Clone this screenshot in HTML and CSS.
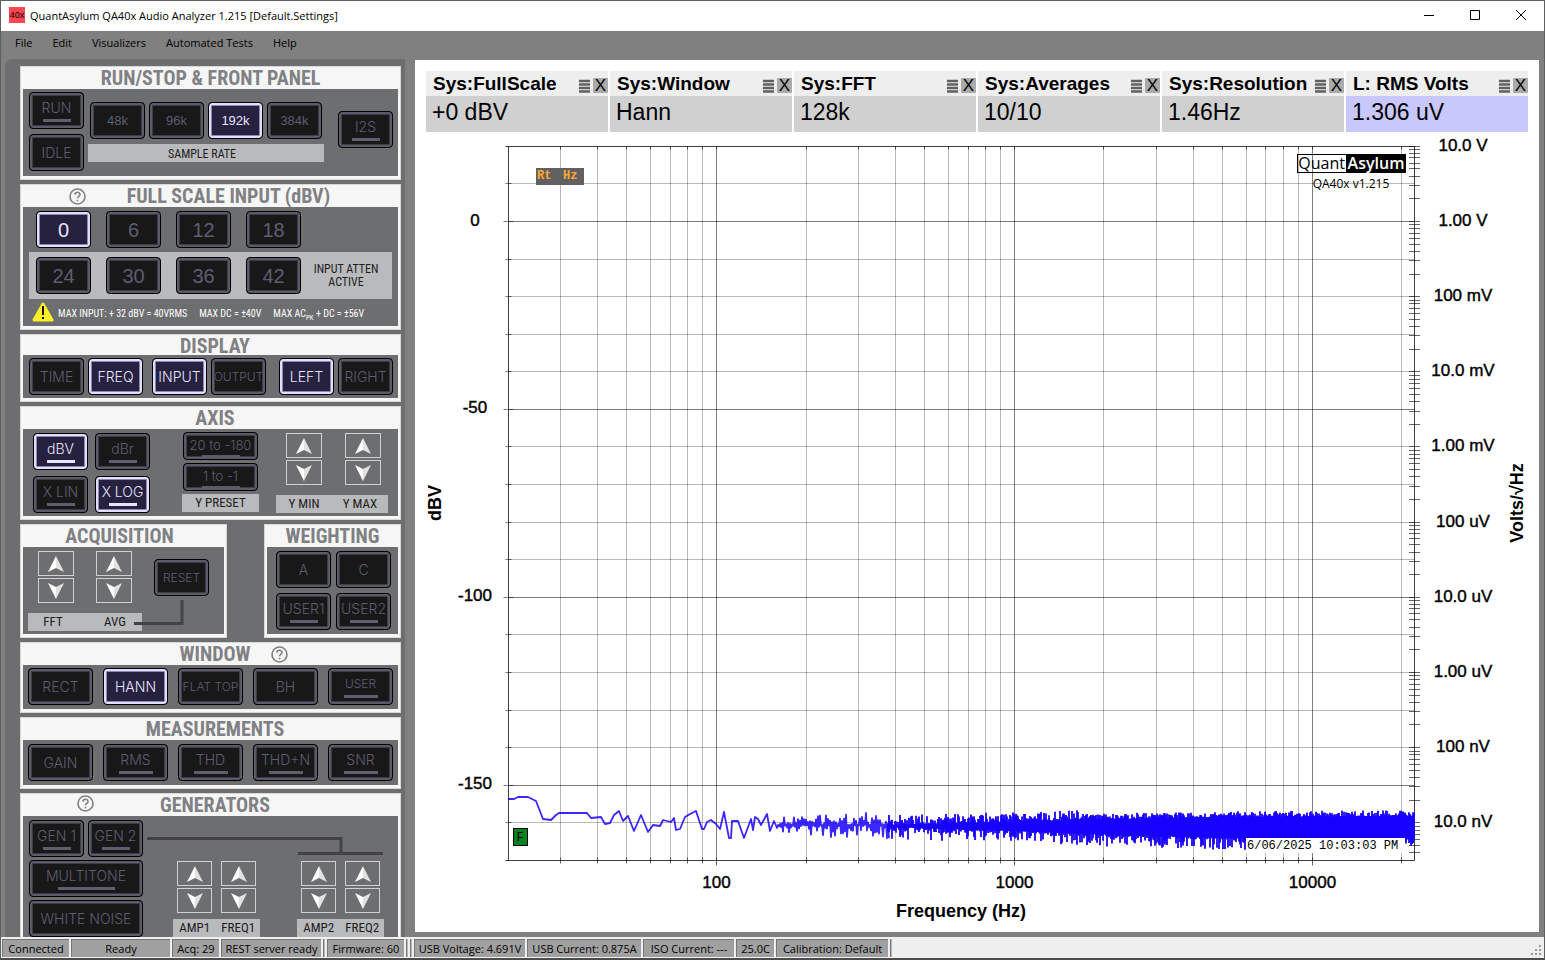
FILE: index.html
```html
<!DOCTYPE html>
<html lang="en">
<head>
<meta charset="utf-8">
<title>QuantAsylum QA40x Audio Analyzer</title>
<link rel="stylesheet" href="styles.css">
</head>
<body>
<svg class="defs" aria-hidden="true">
  <symbol id="up" viewBox="0 0 16 16"><path d="M8 0 16 16 8 12Z" fill="#e2e2e2"/><path d="M8 0 0 16 8 12Z" fill="#fff"/></symbol>
  <symbol id="down" viewBox="0 0 16 16"><path d="M8 16 16 0 8 4Z" fill="#e2e2e2"/><path d="M8 16 0 0 8 4Z" fill="#fff"/></symbol>
  <symbol id="help" viewBox="0 0 17 17"><circle cx="8.500" cy="8.500" r="7.500" fill="none" stroke="#808184" stroke-width="1.600"/><path d="M6 6.700C6 3.400 11 3.500 11 6.400 11 8.300 8.500 8.300 8.500 10.300M8.500 11.700V13.300" fill="none" stroke="#808184" stroke-width="1.600"/></symbol>
  <symbol id="lines" viewBox="0 0 12 14"><path d="M0 2H11M0 5.500H11M0 9H11M0 12.500H11" stroke="#606060" stroke-width="2.400"/></symbol>
</svg>
<div class="window">
  <header class="titlebar">
    <span class="app-icon">40x</span>
    <h1>QuantAsylum QA40x Audio Analyzer 1.215 [Default.Settings]</h1>
    <button class="win-btn" aria-label="Minimize"><svg width="12" height="12"><path d="M1 6.500H11" stroke="#000"/></svg></button>
    <button class="win-btn" aria-label="Maximize"><svg width="12" height="12"><path d="M1.500 1.500H10.500V10.500H1.500Z" fill="none" stroke="#000"/></svg></button>
    <button class="win-btn" aria-label="Close"><svg width="12" height="12"><path d="M1 1 11 11M11 1 1 11" stroke="#000"/></svg></button>
  </header>
  <nav class="menubar">
    <button>File</button><button>Edit</button><button>Visualizers</button><button>Automated Tests</button><button>Help</button>
  </nav>
  <main class="main">
    <aside class="panel">
      <section class="group">
        <h2>RUN/STOP &amp; FRONT PANEL</h2>
        <div class="body run">
          <div class="stack"><button class="key led">RUN</button><button class="key">IDLE</button></div>
          <div class="rates">
            <div class="row"><button class="key digits">48k</button><button class="key digits">96k</button><button class="key digits on">192k</button><button class="key digits">384k</button></div>
            <div class="plate">SAMPLE RATE</div>
          </div>
          <button class="key led i2s">I2S</button>
        </div>
      </section>

      <section class="group">
        <h2 class="shift">FULL SCALE INPUT (dBV)</h2>
        <button class="help help-scale" aria-label="Help"><svg><use href="#help"/></svg></button>
        <div class="body scale">
          <div class="scale-row"><button class="key big on">0</button><button class="key big">6</button><button class="key big">12</button><button class="key big">18</button></div>
          <div class="scale-row atten"><button class="key big">24</button><button class="key big">30</button><button class="key big">36</button><button class="key big">42</button><span>INPUT ATTEN<br>ACTIVE</span></div>
          <div class="warn">
            <svg width="22" height="20" viewBox="0 0 22 20"><path d="M11 2 20 18H2Z" fill="#ffef29" stroke="#ffef29" stroke-width="3" stroke-linejoin="round"/><path d="M11 4V13M11 15V17" stroke="#111" stroke-width="2"/></svg>
            <span>MAX INPUT: + 32 dBV = 40VRMS</span><span>MAX DC = ±40V</span><span>MAX AC<sub>PK</sub> + DC = ±56V</span>
          </div>
        </div>
      </section>

      <section class="group">
        <h2 class="nudge">DISPLAY</h2>
        <div class="body display">
          <div class="row"><button class="key">TIME</button><button class="key on">FREQ</button></div>
          <div class="row"><button class="key on">INPUT</button><button class="key small">OUTPUT</button></div>
          <div class="row last"><button class="key on">LEFT</button><button class="key">RIGHT</button></div>
        </div>
      </section>

      <section class="group">
        <h2 class="nudge">AXIS</h2>
        <div class="body axis">
          <div class="axis-keys"><button class="key led on">dBV</button><button class="key led">dBr</button><button class="key led">X LIN</button><button class="key led on">X LOG</button></div>
          <div class="presets"><button class="key preset">20 to -180</button><button class="key preset">1 to -1</button><div class="plate">Y PRESET</div></div>
          <div class="spins">
            <div class="spin-row"><div class="spin"><button aria-label="Y min up"><svg><use href="#up"/></svg></button><button aria-label="Y min down"><svg><use href="#down"/></svg></button></div><div class="spin"><button aria-label="Y max up"><svg><use href="#up"/></svg></button><button aria-label="Y max down"><svg><use href="#down"/></svg></button></div></div>
            <div class="plate split"><span>Y MIN</span><span>Y MAX</span></div>
          </div>
        </div>
      </section>

      <div class="pair">
        <section class="group acq">
          <h2>ACQUISITION</h2>
          <div class="body acq-body">
            <div class="spins">
              <div class="spin-row"><div class="spin"><button aria-label="FFT up"><svg><use href="#up"/></svg></button><button aria-label="FFT down"><svg><use href="#down"/></svg></button></div><div class="spin"><button aria-label="Average up"><svg><use href="#up"/></svg></button><button aria-label="Average down"><svg><use href="#down"/></svg></button></div></div>
              <div class="plate split"><span>FFT</span><span>AVG</span></div>
            </div>
            <button class="key small">RESET</button>
            <svg class="wire wire-acq" width="50" height="26"><path d="M0 23.500H48V0" fill="none" stroke="#434345" stroke-width="3"/></svg>
          </div>
        </section>
        <section class="group weight">
          <h2>WEIGHTING</h2>
          <div class="body weight-body"><button class="key">A</button><button class="key">C</button><button class="key led">USER1</button><button class="key led">USER2</button></div>
        </section>
      </div>

      <section class="group">
        <h2 class="nudge">WINDOW</h2>
        <button class="help help-window" aria-label="Help"><svg><use href="#help"/></svg></button>
        <div class="body five"><button class="key">RECT</button><button class="key on">HANN</button><button class="key small">FLAT TOP</button><button class="key">BH</button><button class="key led small">USER</button></div>
      </section>

      <section class="group">
        <h2 class="nudge">MEASUREMENTS</h2>
        <div class="body five meas"><button class="key">GAIN</button><button class="key led">RMS</button><button class="key led">THD</button><button class="key led">THD+N</button><button class="key led">SNR</button></div>
      </section>

      <section class="group gen">
        <h2 class="nudge">GENERATORS</h2>
        <button class="help help-gen" aria-label="Help"><svg><use href="#help"/></svg></button>
        <div class="body gen-body">
          <div class="gen-keys"><button class="key led">GEN 1</button><button class="key led">GEN 2</button><button class="key led wide">MULTITONE</button><button class="key wide">WHITE NOISE</button></div>
          <div class="spins one">
            <div class="spin-row"><div class="spin"><button aria-label="Amp 1 up"><svg><use href="#up"/></svg></button><button aria-label="Amp 1 down"><svg><use href="#down"/></svg></button></div><div class="spin"><button aria-label="Freq 1 up"><svg><use href="#up"/></svg></button><button aria-label="Freq 1 down"><svg><use href="#down"/></svg></button></div></div>
            <div class="plate split"><span>AMP1</span><span>FREQ1</span></div>
          </div>
          <div class="spins two">
            <div class="spin-row"><div class="spin"><button aria-label="Amp 2 up"><svg><use href="#up"/></svg></button><button aria-label="Amp 2 down"><svg><use href="#down"/></svg></button></div><div class="spin"><button aria-label="Freq 2 up"><svg><use href="#up"/></svg></button><button aria-label="Freq 2 down"><svg><use href="#down"/></svg></button></div></div>
            <div class="plate split"><span>AMP2</span><span>FREQ2</span></div>
          </div>
          <svg class="wire wire-gen" width="238" height="20"><path d="M0 2.500H194V17M151 17.500H236" fill="none" stroke="#434345" stroke-width="3"/></svg>
        </div>
      </section>
    </aside>

    <div class="plot">
      <div class="cards">
        <article class="card"><header><h3>Sys:FullScale</h3><button aria-label="Menu"><svg><use href="#lines"/></svg></button><button class="x" aria-label="Close">X</button></header><p>+0 dBV</p></article>
        <article class="card"><header><h3>Sys:Window</h3><button aria-label="Menu"><svg><use href="#lines"/></svg></button><button class="x" aria-label="Close">X</button></header><p>Hann</p></article>
        <article class="card"><header><h3>Sys:FFT</h3><button aria-label="Menu"><svg><use href="#lines"/></svg></button><button class="x" aria-label="Close">X</button></header><p>128k</p></article>
        <article class="card"><header><h3>Sys:Averages</h3><button aria-label="Menu"><svg><use href="#lines"/></svg></button><button class="x" aria-label="Close">X</button></header><p>10/10</p></article>
        <article class="card"><header><h3>Sys:Resolution</h3><button aria-label="Menu"><svg><use href="#lines"/></svg></button><button class="x" aria-label="Close">X</button></header><p>1.46Hz</p></article>
        <article class="card left"><header><h3>L: RMS Volts</h3><button aria-label="Menu"><svg><use href="#lines"/></svg></button><button class="x" aria-label="Close">X</button></header><p>1.306 uV</p></article>
      </div>
      <svg id="chart" class="chart" viewBox="415 132 1124 800" role="img" aria-label="Noise spectrum, dBV against frequency"></svg>
    </div>
  </main>
  <footer class="status">
    <span class="w-conn">Connected</span><span class="w-ready">Ready</span><span class="w-acq">Acq: 29</span><span class="w-rest">REST server ready</span><i></i><span class="w-firm">Firmware: 60</span><i></i><i></i><span class="w-volt">USB Voltage: 4.691V</span><span class="w-cur">USB Current: 0.875A</span><span class="w-iso">ISO Current: ---</span><span class="w-temp">25.0C</span><span class="w-cal">Calibration: Default</span><i></i>
    <svg class="grip" width="12" height="12"><path d="M9 0h2v2h-2zM9 4h2v2h-2zM9 8h2v2h-2zM5 4h2v2h-2zM5 8h2v2h-2zM1 8h2v2h-2z" fill="#9a9a9a"/></svg>
  </footer>
</div>
<script src="chart.js"></script>
</body>
</html>
```
FILE: styles.css
```css
* { box-sizing: border-box; }
body { margin: 0; background: #808080; font-family: "Open Sans", "Noto Sans", sans-serif; font-size: 12px; color: #000; }
button { font: inherit; color: inherit; background: none; border: 0; padding: 0; margin: 0; }
h1, h2, h3, p { margin: 0; font-weight: normal; }
.defs { display: none; }
.window { display: flex; flex-direction: column; min-height: 100vh; border: 1px solid #5f5f5f; border-bottom: 2px solid #4c4c4c; }

.titlebar { display: flex; align-items: center; height: 30px; background: #fff; padding-left: 8px; }
.titlebar h1 { flex: 1; margin-left: 5px; padding-bottom: 2px; font-size: 11px; }
.app-icon { width: 16px; height: 16px; margin-bottom: 2px; background: #ff4653; font: 9px/16px "Liberation Sans", sans-serif; text-align: center; }
.win-btn { width: 46px; height: 30px; padding-bottom: 2px; display: grid; place-items: center; }

.menubar { display: flex; align-items: center; gap: 20px; height: 28px; padding: 0 14px 6px; font-size: 11px; }

.main { display: flex; flex: 1; padding-left: 4px; }
.panel { flex: 0 0 400px; min-width: 0; padding: 7px 4px 0 15px; background: #6d6e70; border-top-left-radius: 8px; display: flex; flex-direction: column; gap: 4px; }
.group { position: relative; background: #f6f6f6; border: 1px solid #d8d8d8; padding: 0 2px 3px; }
.group h2 { height: 22px; text-align: center; color: #808184; font: bold 20px/22px "Roboto Condensed", Roboto, sans-serif; white-space: nowrap; }
.group .shift { padding-left: 36px; }
.group .nudge { padding-left: 9px; }
.body { background: #6d6e70; position: relative; }
.row, .stack { display: flex; gap: 4px; }
.stack { flex-direction: column; gap: 5px; }

.key { display: flex; flex-direction: column; align-items: center; justify-content: center; width: 55px; height: 37px; border: 1px solid #000; border-radius: 4px; background: #181818; box-shadow: inset 0 0 0 2px #5b5a6b, inset 0 0 0 3px #3d3c47; color: #5f5d70; font: 300 14px/18px Inter, sans-serif; white-space: nowrap; }
.key.on { background: #25213f; color: #e8e4ff; box-shadow: inset 0 0 0 2px #e2deff, inset 0 0 0 3px #8d88b5; }
.key.small { font-size: 12px; }
.key.digits { font-size: 13px; font-family: "Liberation Sans", sans-serif; }
.key.big { font-size: 20px; font-family: "Liberation Sans", sans-serif; }
.led::after { content: ""; width: 28px; height: 3px; margin-top: 2px; background: currentColor; }
.plate { height: 18px; background: #b9babc; color: #1d1d1d; text-align: center; font: 13px/18px "Roboto Condensed", Roboto, sans-serif; white-space: nowrap; }
.split { display: grid; grid-template-columns: 1fr 1fr; }

.help { position: absolute; top: 3px; width: 17px; height: 17px; }
.help svg { display: block; width: 17px; height: 17px; }
.help-scale { left: 48px; }
.help-window { left: 250px; }
.help-gen { left: 56px; top: 1px; }

.run { display: flex; align-items: flex-start; padding: 3px 5px 5px 6px; }
.rates { margin: 10px 0 0 5px; padding-left: 1px; }
.rates .plate { margin: 5px -2px 0 -2px; padding-right: 8px; font-size: 12px; line-height: 20px; }
.i2s { margin: 19px 0 0 auto; }

.scale { padding: 4px 6px 2px; }
.scale-row { display: flex; gap: 15px; padding-left: 7px; }
.atten { margin-top: 4px; padding: 5px 6px 5px 7px; background: #b9babc; color: #1d1d1d; }
.atten span { flex: 1; margin-left: -10px; align-self: center; text-align: center; font: 12px/13px "Roboto Condensed", Roboto, sans-serif; white-space: nowrap; }
.warn { display: flex; align-items: center; height: 25px; color: #fff; padding-left: 3px; font: 10px/16px "Roboto Condensed", Roboto, sans-serif; white-space: nowrap; }
.warn span { margin: 4px 8px 0 4px; }
.warn sub { font-size: 7px; line-height: 0; }

.display { display: flex; padding: 3px 5px 4px 6px; gap: 9px; margin-top: -2px; height: 43px; }
.last { margin-left: auto; }

.axis { display: flex; padding: 4px 10px 3px; }
.axis-keys { display: grid; grid-template-columns: 55px 55px; gap: 6px 7px; }
.presets { margin-left: 32px; width: 77px; margin-top: -1px; }
.preset { width: 75px; height: 28px; margin: 0 auto 3px; font-size: 13px; line-height: 16px; padding-bottom: 3px; position: relative; }
.preset::after { content: ""; position: absolute; bottom: 2px; width: 38px; height: 2px; background: #5b5a6b; }
.spins { display: flex; flex-direction: column; justify-content: space-between; }
.axis .spins { margin-left: auto; width: 112px; }
.spin-row { display: flex; justify-content: space-between; padding: 0 7px 0 10px; }
.spin { display: flex; flex-direction: column; gap: 2px; }
.spin button { width: 36px; height: 25px; border: 1px solid #d0d0d0; display: grid; place-items: center; }
.spin svg { width: 16px; height: 16px; display: block; }

.pair { display: flex; justify-content: space-between; }
.acq { width: 207px; }
.weight { width: 137px; }
.acq h2 { padding-right: 8px; }
.acq-body { display: flex; height: 87px; padding: 4px 15px 3px 5px; }
.acq-body .spins { width: 114px; }
.acq-body .spin-row { padding-right: 10px; }
.acq-body .split { grid-template-columns: 50px 1fr; }
.acq-body .split span:last-child { padding-left: 10px; }
.acq-body .key { margin: 8px 0 0 auto; }
.wire { position: absolute; }
.wire-acq { left: 111px; top: 53px; }
.weight-body { display: grid; grid-template-columns: 55px 55px; gap: 5px; padding: 4px 7px 4px 9px; height: 87px; }

.five { display: flex; justify-content: space-between; padding: 3px 5px 4px; }
.five .key { width: 65px; }
.five .led::after { width: 34px; }
.meas { padding-top: 4px; }
.gen { flex: 1; padding-bottom: 0; border-bottom: 0; }
.gen-body { display: flex; padding: 4px 14px 0 6px; }
.gen-keys { display: grid; grid-template-columns: 55px 55px; grid-auto-rows: 37px; gap: 3px 4px; }
.wide { grid-column: 1 / 3; width: 114px; }
.wide.led::after { width: 57px; }
.gen-body .spins { width: 87px; height: 76px; margin-top: 41px; }
.gen-body .spin-row { padding: 0 4px 0 4px; }
.gen-body .spin button { width: 35px; }
.one { margin-left: 30px; }
.two { margin-left: auto; }
.wire-gen { left: 124px; top: 20px; }

.plot { flex: 1; min-width: 0; margin: 1px 5px 5px 10px; background: #fff; font-family: "Liberation Sans", Arial, sans-serif; }
.cards { display: grid; grid-template-columns: repeat(6, minmax(0, 1fr)); gap: 2px; padding: 11px 11px 0; }
.card { background: #d0d0d0; }
.card.left { background: #c8c8fc; }
.card header { display: flex; align-items: center; height: 25px; background: #eee; padding-left: 7px; gap: 2px; }
.card h3 { flex: 1; min-width: 0; font-size: 19px; line-height: 26px; font-weight: bold; white-space: nowrap; }
.card header button { width: 12px; height: 15px; margin-top: 4px; }
.card header svg { display: block; width: 12px; height: 14px; }
.card header .x { width: 15px; background: #aaa; font-size: 17px; line-height: 15px; }
.card p { height: 36px; padding-left: 6px; font-size: 23px; line-height: 33px; }
.chart { display: block; width: 100%; height: auto; }
.chart text { font-size: 17px; }
.chart .tick-label { stroke: #000; stroke-width: 0.4px; }
.chart .title { font-size: 18px; font-weight: bold; }
.chart .stamp { font: 12px "Liberation Mono", monospace; }
.chart .badge { font: bold 12px "Liberation Mono", monospace; fill: #ffa830; }
.chart .brand { font: 16px "Open Sans", sans-serif; }
.chart .brand-bold { font: 600 16px "Open Sans", sans-serif; fill: #fff; }
.chart .version { font: 12px "Open Sans", sans-serif; }

.status { display: flex; height: 21px; padding: 2px 2px 1px 1px; background: #efefef; gap: 2px; font-size: 11px; white-space: nowrap; }
.status span { height: 18px; line-height: 17px; background: #a0a0a0; border: 1px solid #777; border-width: 1px 0 0 1px; text-align: center; }
.status i { width: 2px; background: #b8b8b8; border-left: 1px solid #777; }
.w-conn { width: 67px; } .w-ready { width: 99px; } .w-acq { width: 47px; } .w-rest { width: 100px; } .w-firm { width: 77px; }
.w-volt { width: 111px; } .w-cur { width: 114px; } .w-iso { width: 91px; } .w-temp { width: 38px; } .w-cal { width: 112px; }
.grip { margin: 6px 0 0 auto; }
```
FILE: chart.js
```js
const NS = "http://www.w3.org/2000/svg";
const chart = document.getElementById("chart");
const LEFT = 508.5, RIGHT = 1414.5, TOP = 146.5, BOTTOM = 860.5;
const xOf = hz => 716.5 + (Math.log10(hz) - 2) * 297.8;
const yOf = db => 221.5 - db * 3.758;
const snap = v => Math.floor(v) + 0.5;

function add(name, attrs, text) {
  const el = document.createElementNS(NS, name);
  for (const key in attrs) el.setAttribute(key, attrs[key]);
  if (text) el.textContent = text;
  chart.appendChild(el);
}
const line = (d, opacity) => add("path", { d, stroke: "#000", "stroke-opacity": opacity, fill: "none" });

// frequency grid
for (let decade = 10; decade <= 10000; decade *= 10) {
  for (let m = 1; m < 10; m++) {
    const hz = decade * m;
    if (hz <= 20 || hz > 21500) continue;
    const x = snap(xOf(hz));
    line(`M${x} ${TOP}V${BOTTOM}`, m === 1 ? 0.5 : 0.28);
    line(`M${x} ${TOP}v3M${x} ${BOTTOM - 3}v${m === 1 ? 8 : 6}`, 0.6);
  }
}
// level grid
for (let db = 10; db > -170; db -= 10) {
  const y = snap(yOf(db)), major = db % 50 === 0;
  line(`M${LEFT} ${y}H${RIGHT}`, major ? 0.52 : 0.28);
  line(`M${LEFT - (major ? 5 : 3)} ${y}H${LEFT + (major ? 5 : 3)}`, 0.5);
}
line(`M${LEFT - 3} ${TOP}H${RIGHT}V${BOTTOM}H${LEFT - 3}M${LEFT} ${TOP}V${BOTTOM}`, 0.75);

// voltage ticks
for (let decade = 10; decade > 1e-9; decade /= 10) {
  for (let m = 10; m > 1; m--) {
    const y = snap(yOf(20 * Math.log10(decade * m / 10)));
    if (y <= BOTTOM) line(`M1409 ${y}H1420`, 0.6);
  }
}

// spectrum: low bins as a line, dense bins as column extremes
let seed = 40;
const rand = () => (seed = (seed * 16807) % 2147483647) / 2147483647;
const low = [[508,799],[514,799],[518,797],[528,797],[536,801],[543,819],[551,820],[556,815],[559,813],[587,813],[591,818],[601,817],[605,824],[610,823],[614,815],[619,811],[623,821],[628,816],[634,831],[641,815],[648,832],[653,825],[660,826],[663,820],[671,822],[674,818],[676,830],[680,829],[685,817],[690,814],[696,811],[702,829],[704,829],[707,822],[711,820],[716,824],[720,829],[724,812],[729,838],[731,838],[732,821],[738,821],[744,838],[751,819],[753,830],[755,817],[758,819],[761,825],[767,814],[770,831],[774,821],[777,828]];
let d = "M" + low.map(p => p.join(" ")).join("L");
for (let x = 778; x < 890; x += 2) {
  const a = 9 + (x - 778) * 0.04;
  d += `L${x} ${(825 - Math.pow(rand(), 1.4) * a).toFixed(1)}L${x + 1} ${(825 + Math.pow(rand(), 1.5) * a * 1.1).toFixed(1)}`;
}
add("path", { d, fill: "none", stroke: "#1800ff", "stroke-opacity": 0.85, "stroke-width": 1.8, "stroke-linejoin": "round" });

const edge = (x, points) => {
  for (let i = 1; i < points.length; i++) {
    const [x0, y0] = points[i - 1], [x1, y1] = points[i];
    if (x <= x1) return y0 + (y1 - y0) * (x - x0) / (x1 - x0);
  }
  return points[points.length - 1][1];
};
let dense = "";
for (let x = 888; x <= 1414; x++) {
  const top = edge(x, [[888, 825], [1014, 822], [1115, 819], [1230, 817], [1414, 816]]);
  const bottom = edge(x, [[888, 827], [1014, 831], [1115, 835], [1230, 838], [1414, 839]]);
  const spread = x < 1080 ? 10 : 6;
  const a = top - Math.pow(rand(), 1.5) * spread;
  const b = bottom + Math.pow(rand(), 2.2) * (x < 1250 ? 12 : 9);
  dense += `M${x} ${a.toFixed(1)}V${b.toFixed(1)}`;
}
add("path", { d: dense, fill: "none", stroke: "#1800ff", "stroke-width": 1.8 });

// tick labels
const label = (x, y, text, cls = "tick-label", anchor = "middle") =>
  add("text", { x, y, class: cls, "text-anchor": anchor }, text);
[100, 1000, 10000].forEach(hz => label(snap(xOf(hz)), 888, String(hz)));
[0, -50, -100, -150].forEach(db => label(475, Math.round(yOf(db)) + 4, String(db)));
["10.0 V", "1.00 V", "100 mV", "10.0 mV", "1.00 mV", "100 uV", "10.0 uV", "1.00 uV", "100 nV", "10.0 nV"]
  .forEach((text, i) => label(1463, Math.round(151 + i * 75.1), text));
label(961, 917, "Frequency (Hz)", "title");
add("text", { class: "title", "text-anchor": "middle", transform: "translate(441 503) rotate(-90)" }, "dBV");
add("text", { class: "title", "text-anchor": "middle", transform: "translate(1523 503) rotate(-90)" }, "Volts/√Hz");

// overlays inside the plot
add("rect", { x: 536, y: 168, width: 48, height: 17, fill: "#606060" });
label(537, 179, "Rt", "badge", "start");
label(563, 179, "Hz", "badge", "start");
add("rect", { x: 1297.5, y: 154.5, width: 108, height: 18, fill: "none", stroke: "#000" });
add("rect", { x: 1346, y: 154, width: 60, height: 19, fill: "#000" });
label(1345, 169, "Quant", "brand", "end");
label(1376, 169, "Asylum", "brand-bold");
label(1351, 188, "QA40x v1.215", "version");
add("rect", { x: 513.5, y: 828.5, width: 14, height: 17, fill: "#0b8020", stroke: "#000" });
label(520, 841, "F", "stamp");
add("rect", { x: 1246, y: 838, width: 159, height: 15, fill: "#fff" });
label(1247, 849, "6/06/2025 10:03:03 PM", "stamp", "start");
```
